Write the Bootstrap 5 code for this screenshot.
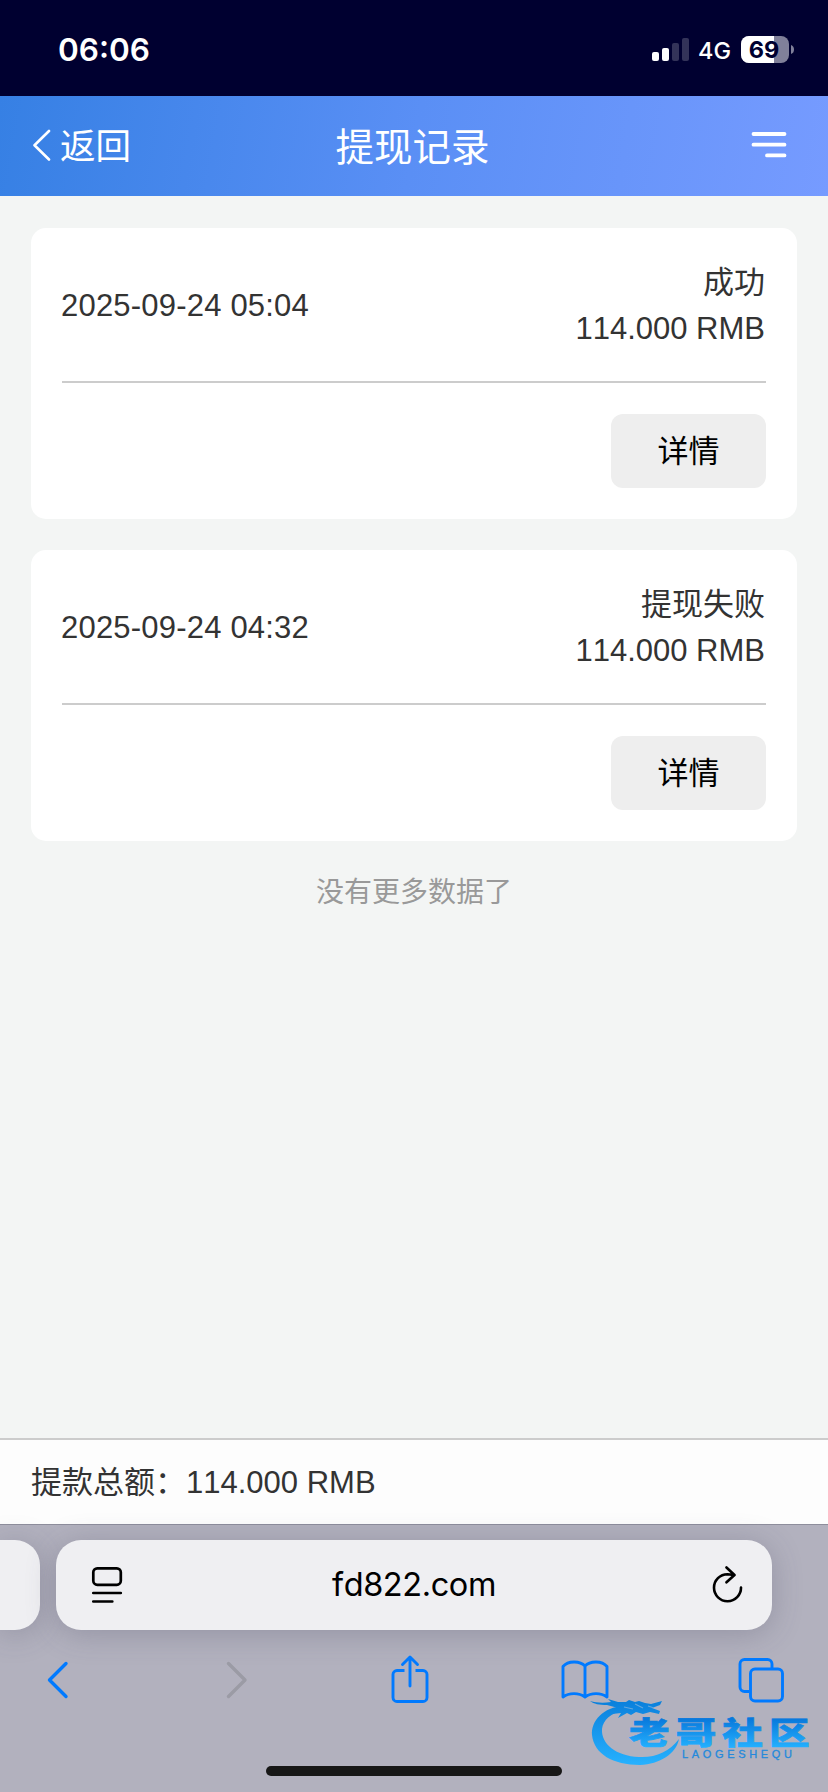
<!DOCTYPE html>
<html lang="zh-CN">
<head>
    <meta charset="UTF-8">
    <meta name="viewport" content="width=device-width, initial-scale=1">
    <title>提现记录</title>
    <!-- Bootstrap CSS -->
    <link href="https://cdn.jsdelivr.net/npm/bootstrap@5.3.3/dist/css/bootstrap.min.css" rel="stylesheet">
    <style>
        body {
            font-family: "Liberation Sans", "Noto Sans CJK SC", sans-serif;
            font-size: 31px;
            line-height: 46px;
            font-kerning: none;
            color: #333;
            background: #f3f5f4;
        }
        svg { display: block; flex: none; }

        .status-bar {
            height: 96px;
            padding: 4px 33px 0 58px;
            background: #000030;
            font-family: Inter, sans-serif;
        }
        .status-time { font-size: 31.5px; font-weight: 600; }
        .status-net { font-size: 23.5px; font-weight: 500; margin: 2px 10px 0 9px; }
        .status-icon { margin-top: -1px; }

        .page-header {
            height: 100px;
            padding: 0 41px 0 33px;
            background: linear-gradient(100deg, #3680e4, #5a8ff5 50%, #769bff);
        }
        .back-link { font-size: 35.5px; gap: 9px; width: 135px; padding-top: 1px; }
        .back-link svg { margin-top: -3px; }
        .page-title { font-size: 38.5px; padding-top: 3px; }
        .menu-side { width: 130px; padding-bottom: 2px; }

        .record-list { padding: 32px 31px 0; gap: 31px; }
        .record { border: 0; border-radius: 15px; padding: 31px; }
        .record-info { height: 124px; padding: 2px 1px 30px 0; border-bottom: 2px solid #ccc; }
        .record-date { letter-spacing: .2px; margin-left: -1px; }
        .btn-detail {
            width: 155px;
            height: 74px;
            margin-top: 31px;
            padding: 2px 0 0;
            border: 0;
            border-radius: 12px;
            background: #eee;
            color: #000;
            font-size: 31px;
        }
        .list-end { font-size: 28px; color: #999; margin-top: -2px; }

        .total-bar { height: 86px; padding: 1px 31px 0; background: #fdfdfd; border-top: 2px solid #ccc; }

        .browser-bar { height: 268px; padding-top: 15px; background: #b2b1be; border-top: 1px solid #8e8e9c; }
        .tab-row { gap: 16px; }
        .tab-prev, .url-box { height: 90px; background: #efeff2; box-shadow: 0 4px 30px rgba(70, 70, 95, .28); }
        .tab-prev { width: 40px; border-radius: 0 25px 25px 0; }
        .url-box { width: 716px; border-radius: 25px; padding: 0 28px 0 35px; color: #000; }
        .url-text { font-family: Inter, sans-serif; font-size: 32.5px; letter-spacing: -.4px; margin-right: 7px; }
        .tool-row { height: 136px; padding: 23px 43.5px 0 33.5px; color: #007aff; }
        .home-line { width: 296px; height: 10px; border-radius: 5px; background: #171717; }
        .site-mark { right: 10px; bottom: 20px; }
    </style>
</head>
<body>
    <div class="vh-100 d-flex flex-column overflow-hidden position-relative">

        <!-- Status bar -->
        <div class="status-bar d-flex justify-content-between align-items-center text-white">
            <span class="status-time">06:06</span>
            <div class="d-flex align-items-center">
                <svg class="status-icon" width="37" height="24" fill="#fff">
                    <rect x="0" y="14" width="7" height="9" rx="2"/>
                    <rect x="10" y="10" width="7" height="13" rx="2"/>
                    <rect x="20" y="5" width="7" height="18" rx="2" opacity=".2"/>
                    <rect x="30" y="0" width="7" height="23" rx="2" opacity=".2"/>
                </svg>
                <span class="status-net">4G</span>
                <svg class="status-icon" width="54" height="27">
                    <clipPath id="battery"><rect width="48" height="27" rx="8"/></clipPath>
                    <g clip-path="url(#battery)">
                        <rect width="48" height="27" fill="#80809a"/>
                        <rect width="33" height="27" fill="#fff"/>
                    </g>
                    <path d="M50 9q3 1 3 4.500t-3 4.500z" fill="#80809a"/>
                    <text x="23" y="22" text-anchor="middle" font-size="23.500" font-weight="700" fill="#000030">69</text>
                </svg>
            </div>
        </div>

        <!-- Header -->
        <header class="page-header d-flex justify-content-between align-items-center text-white">
            <a class="back-link d-flex align-items-center text-white text-decoration-none" href="#">
                <svg width="18" height="32" fill="none" stroke="#fff" stroke-width="2.600" stroke-linecap="round" stroke-linejoin="round">
                    <path d="M16 2L1.500 16.300 16 30.500"/>
                </svg>
                <span class="text-nowrap">返回</span>
            </a>
            <span class="page-title">提现记录</span>
            <div class="menu-side d-flex justify-content-end">
                <svg width="36" height="26" stroke="#fff" stroke-width="3.800" stroke-linecap="round">
                    <path d="M2.500 2h31M2.500 12.700h31M16 23.400h17.500"/>
                </svg>
            </div>
        </header>

        <!-- Records -->
        <main class="flex-grow-1">
            <div class="record-list d-flex flex-column">
                <div class="card record">
                    <div class="record-info d-flex justify-content-between align-items-center">
                        <span class="record-date">2025-09-24 05:04</span>
                        <div class="text-end">
                            <div>成功</div>
                            <div>114.000 RMB</div>
                        </div>
                    </div>
                    <button class="btn btn-detail align-self-end">详情</button>
                </div>
                <div class="card record">
                    <div class="record-info d-flex justify-content-between align-items-center">
                        <span class="record-date">2025-09-24 04:32</span>
                        <div class="text-end">
                            <div>提现失败</div>
                            <div>114.000 RMB</div>
                        </div>
                    </div>
                    <button class="btn btn-detail align-self-end">详情</button>
                </div>
                <div class="list-end text-center">没有更多数据了</div>
            </div>
        </main>

        <div class="total-bar d-flex align-items-center">提款总额：114.000 RMB</div>

        <!-- Browser toolbar -->
        <footer class="browser-bar">
            <div class="tab-row d-flex">
                <div class="tab-prev"></div>
                <div class="url-box d-flex align-items-center justify-content-between">
                    <svg width="32" height="38" fill="none" stroke="#000" stroke-width="2.700" stroke-linecap="round">
                        <rect x="2.300" y="2.300" width="27.500" height="16.500" rx="4"/>
                        <path d="M2.300 27h27.500M2.300 35.500h19"/>
                    </svg>
                    <span class="url-text">fd822.com</span>
                    <svg width="32" height="38" fill="none" stroke="#000" stroke-width="2.600" stroke-linecap="round" stroke-linejoin="round">
                        <path d="M29 21.500A13.500 13.500 0 1 1 15.500 8.200L22 9M14.500 1.500L22.500 9l-8 7.300"/>
                    </svg>
                </div>
            </div>
            <div class="tool-row d-flex justify-content-between align-items-start">
                <svg width="48" height="52" fill="none" stroke="currentColor" stroke-width="3.400" stroke-linecap="round" stroke-linejoin="round">
                    <path d="M32 10.500L15.500 27 32 43.500"/>
                </svg>
                <svg width="48" height="52" fill="none" stroke="#9b9ba5" stroke-width="3.400" stroke-linecap="round" stroke-linejoin="round">
                    <path d="M19.500 10.500L36 27 19.500 43.500"/>
                </svg>
                <svg width="48" height="52" fill="none" stroke="currentColor" stroke-width="2.900" stroke-linejoin="round">
                    <path d="M19.500 17.500H12a4 4 0 0 0-4 4V44.500a4 4 0 0 0 4 4H38a4 4 0 0 0 4-4V21.500a4 4 0 0 0-4-4H30.500"/>
                    <path d="M25 33V4.500M17.500 11.500L25 4l7.500 7.500" stroke-linecap="round"/>
                </svg>
                <svg width="48" height="52" fill="none" stroke="currentColor" stroke-width="2.900" stroke-linejoin="round">
                    <path d="M24 44V13C19 7.500 7 7.500 2 13.500V44C8 39.500 18 39.500 24 44C30 39.500 40 39.500 46 44V13.500C41 7.500 29 7.500 24 13"/>
                </svg>
                <svg width="48" height="52" fill="none" stroke="currentColor" stroke-width="2.900">
                    <path d="M12 38.500H7.500a4.500 4.500 0 0 1-4.500-4.500V11a4.500 4.500 0 0 1 4.500-4.500H30.500a4.500 4.500 0 0 1 4.500 4.500V16"/>
                    <rect x="13.500" y="16" width="32" height="32" rx="4.500"/>
                </svg>
            </div>
            <div class="home-line mx-auto"></div>
        </footer>

        <!-- Community logo -->
        <svg class="site-mark position-absolute" width="228" height="76" viewBox="0 0 228 76">
            <defs>
                <linearGradient id="ring" x1="0" y1="5" x2="0" y2="70" gradientUnits="userSpaceOnUse">
                    <stop offset="0" stop-color="#0a80dc"/>
                    <stop offset="1" stop-color="#27b2ff"/>
                </linearGradient>
                <linearGradient id="word" x1="0" y1="23" x2="0" y2="52" gradientUnits="userSpaceOnUse">
                    <stop offset="0" stop-color="#0879dc"/>
                    <stop offset="1" stop-color="#25b1ff"/>
                </linearGradient>
            </defs>
            <g fill="url(#ring)">
                <path d="M34 10C13 11 1 25 2 39C4 58 23 69 50 69C70 68 86 58 89 43C79 56 65 62 49 61C26 60 11 48 12 33C13 24 21 17 34 14L44 15Z"/>
                <path d="M0 5C7 7 14 7 21 6L18 3L28 6L36 6L39 4L45 6L49 5L55 7L61 8L72 5L70 9L62 12L70 15L69 18L60 16L53 18L46 16L41 19L37 17L28 22L31 17L22 18L28 12L17 9C9 9 4 8 0 5Z"/>
            </g>
            <path d="M34 11l9 2m2-5l8 4m5-2l6 2" stroke="#63a6dd" stroke-width="1.200"/>
            <g fill="url(#word)" stroke="url(#word)" font-family="Noto Sans CJK SC, sans-serif" font-weight="900">
                <text transform="translate(39 0) scale(1.330 1)" x="0" y="48.500" font-size="30.500" letter-spacing="4.600" stroke-width=".7">老哥社区</text>
            </g>
            <text x="92" y="62" font-family="Liberation Sans, sans-serif" font-size="11" fill="#2389dc" stroke="#2389dc" stroke-width=".3" textLength="110">LAOGESHEQU</text>
        </svg>
    </div>

    <script src="https://cdn.jsdelivr.net/npm/bootstrap@5.3.3/dist/js/bootstrap.bundle.min.js"></script>
</body>
</html>
